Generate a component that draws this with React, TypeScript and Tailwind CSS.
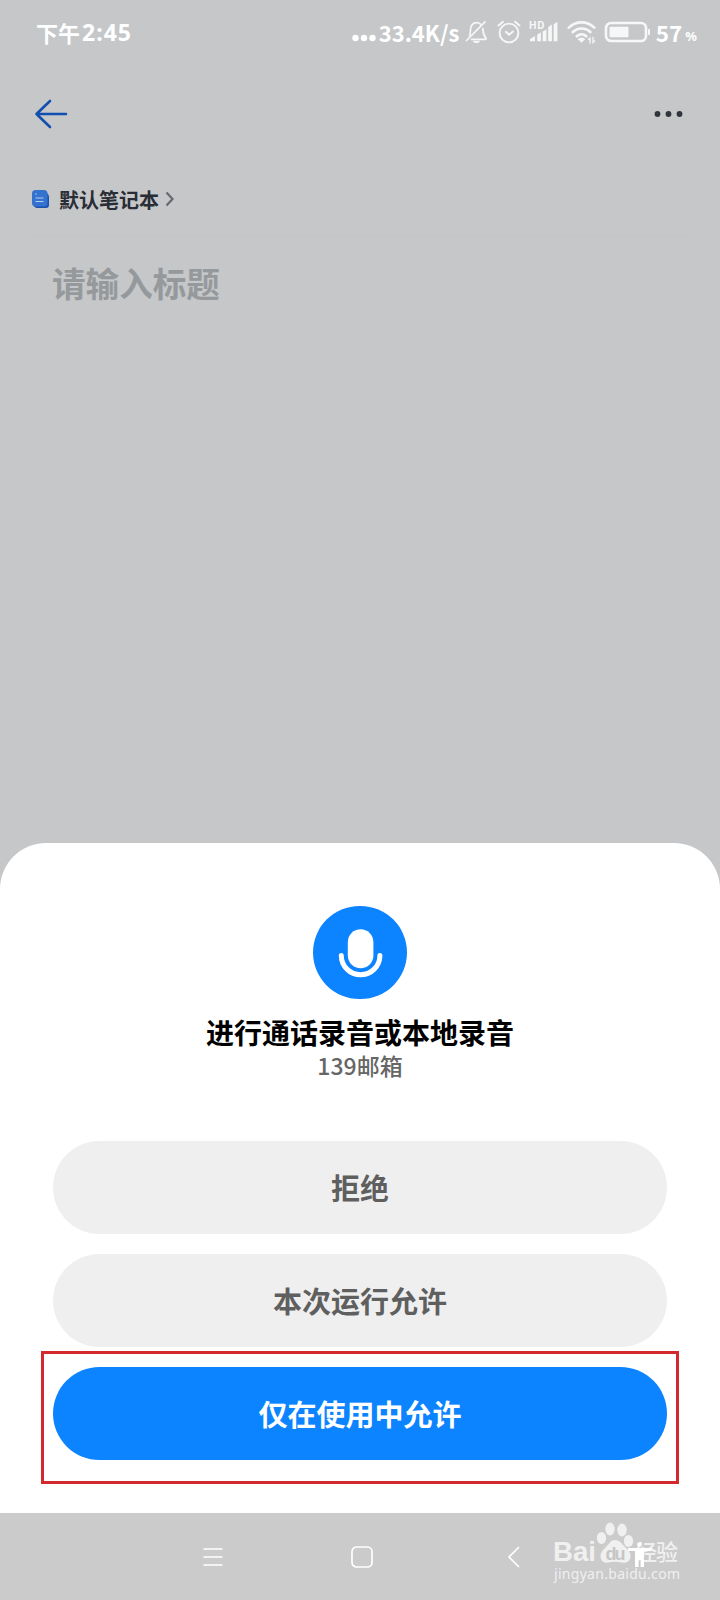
import clsx from "clsx";

const StatusBar = () => {
  return (
    <div className="h-16 flex items-center pl-[36px] pr-[23px] text-white font-bold">
      <div className="flex text-[22px] leading-8">
        <span>下午</span>
        <span className="ml-[2px] font-['Noto_Sans'] text-[23px] tracking-[1px]">
          2:45
        </span>
      </div>
      <div className="ml-auto flex items-center">
        <svg width="25" height="32" viewBox="0 0 25 32" fill="#fff">
          <circle cx="3.5" cy="22" r="3.2" />
          <circle cx="12" cy="22" r="3.2" />
          <circle cx="20.5" cy="22" r="3.2" />
        </svg>
        <span className="w-[84px] pl-[2px] text-[22px] leading-8 whitespace-nowrap">
          33.4K/s
        </span>
        {/* muted bell */}
        <svg
          className="ml-[4px]"
          width="24"
          height="24"
          viewBox="0 0 24 24"
          fill="none"
          stroke="#f7f7f7"
          strokeWidth="1.7"
          strokeLinecap="round"
        >
          <path d="M4.5 15.5c1-1.5 1-3 1-6 0-4 2.6-6.8 6-6.8 1.6 0 3 .6 4 1.5" />
          <path d="M17.8 8.6c.2 5 .7 6.4 3 9.4a.8.8 0 0 1-.6 1.4H6.5" />
          <path d="M20 1.8 1.5 20.5" />
          <path d="M8.5 21.3h6l-1.5 1.2h-3z" fill="#f7f7f7" strokeWidth="1" />
        </svg>
        {/* alarm clock */}
        <svg
          className="ml-[8px]"
          width="24"
          height="24"
          viewBox="0 0 24 24"
          fill="none"
          stroke="#f7f7f7"
          strokeWidth="1.9"
          strokeLinecap="round"
        >
          <circle cx="12" cy="13" r="9.4" />
          <path d="M1.5 5.6 6 1.8M22.5 5.6 18 1.8M8.8 11.8l3.2 3 4-3.3" />
        </svg>
        <div className="relative ml-[8px]">
          <svg width="30" height="24" viewBox="0 0 30 24" fill="#f7f7f7">
            <path d="M1 21.3v-2.3l5-3v5.3zM8.2 14.5l3.7-2v8.8H8.2zM13.7 11.5l3.7-2v11.8h-3.7zM19.2 7l3.7-2.5v16.8h-3.7zM24.7 4.3l3.7-2.6v19.6h-3.7z" />
          </svg>
          <span className="absolute left-0 -top-[3px] text-[10.5px] leading-4 tracking-[0.4px] text-[#f7f7f7]">
            HD
          </span>
        </div>
        <svg
          className="ml-[8px]"
          width="29"
          height="24"
          viewBox="0 0 29 24"
          fill="none"
          stroke="#f7f7f7"
          strokeWidth="2.7"
          strokeLinecap="round"
        >
          <path d="M1.8 7.6c7.2-7 18.5-7 25.5 0M5.8 12c5-4.7 12.6-4.7 17.5 0M9.8 16.2c2.8-2.5 6.7-2.5 9.5 0" />
          <path
            d="m11.5 19.2 3.1 3 3-3c-1.8-1.6-4.3-1.6-6.1 0z"
            fill="#f7f7f7"
            strokeWidth="1"
          />
          <path d="M23 23v-5l-1.5 1.5M26 17.5v5l1.5-1.5" strokeWidth="1.3" />
        </svg>
        <svg
          className="ml-[8px]"
          width="46"
          height="22"
          viewBox="0 0 46 22"
          fill="none"
        >
          <rect
            x="2"
            y="2"
            width="40"
            height="18"
            rx="5"
            stroke="#f7f7f7"
            strokeWidth="2.6"
          />
          <rect x="5.5" y="5.8" width="19" height="10.5" rx="1" fill="#f7f7f7" />
          <path d="M44 8h.8q1.2 0 1.2 1v4q0 1-1.2 1H44z" fill="#f7f7f7" />
        </svg>
        <span className="ml-[6px] text-[22.5px] leading-8">57</span>
        <span className="ml-[3px] mt-[7px] font-['Noto_Sans'] text-[13px] leading-5">
          %
        </span>
      </div>
    </div>
  );
};

const NotebookIcon = () => {
  return (
    <svg width="18" height="19" viewBox="0 0 18 19">
      <path
        d="M5 2.8h9.5Q17 4 17 7v8q0 3-3 3H5q-2 0-3-2z"
        fill="#1b52b2"
      />
      <rect x="0" y="0" width="15.5" height="16.5" rx="3.5" fill="#3472cf" />
      <path d="M3.5 8h8M3.5 11.5h8" stroke="#b7cdec" strokeWidth="1.2" />
      <circle cx="4" cy="4" r=".8" fill="#a9c6ee" />
    </svg>
  );
};

type TAction = {
  label: string;
  primary?: boolean;
};

const actions: TAction[] = [
  { label: "拒绝" },
  { label: "本次运行允许" },
  { label: "仅在使用中允许", primary: true },
];

const PermissionSheet = () => {
  return (
    <div className="h-[670px] bg-white rounded-t-[46px] px-[53px] pt-[63px] flex flex-col items-center">
      <div className="w-[94px] h-[93px] flex justify-center rounded-full bg-[#0d84ff]">
        <svg width="93" height="93" viewBox="0 0 93 93" fill="none">
          <rect x="33.8" y="23.3" width="25.6" height="39" rx="12.8" fill="#fff" />
          <path
            d="M27.3 49.5a19.3 19.3 0 0 0 38.6 0"
            stroke="#fff"
            strokeWidth="5"
            strokeLinecap="round"
          />
        </svg>
      </div>
      <h1 className="mt-[14px] h-[38px] leading-[38px] text-[28px] font-bold text-black whitespace-nowrap">
        进行通话录音或本地录音
      </h1>
      <p className="h-7 leading-7 text-[23px] text-[#666] font-medium">
        139邮箱
      </p>
      <div className="mt-[62px] w-full flex flex-col gap-[20px]">
        {actions.map((item) => (
          <div key={item.label} className="relative">
            <button
              className={clsx(
                "w-full h-[93px] rounded-full text-[29px] font-bold",
                item.primary
                  ? "bg-[#0d84ff] text-white"
                  : "bg-[#efefef] text-[#5f5f5f]"
              )}
            >
              {item.label}
            </button>
            {item.primary && (
              <div className="absolute -top-[16px] -left-[12px] -right-[12px] h-[133px] border-[3px] border-[#d3292f]"></div>
            )}
          </div>
        ))}
      </div>
    </div>
  );
};

const Watermark = () => {
  return (
    <div className="absolute left-[552px] top-[8px]">
      <svg width="140" height="78" viewBox="0 0 140 78" fill="#f0f0f0">
        <text
          x="1"
          y="40"
          fontSize="27"
          fontWeight="700"
          textLength="43"
          lengthAdjust="spacingAndGlyphs"
          fontFamily="Liberation Sans, sans-serif"
        >
          Bai
        </text>
        <ellipse cx="49.5" cy="17" rx="4.7" ry="6" />
        <ellipse cx="58" cy="8" rx="4.7" ry="6.5" />
        <ellipse cx="70" cy="9" rx="4.7" ry="6.5" />
        <ellipse cx="76.5" cy="20" rx="4.7" ry="6" />
        <path d="M63 19c5 0 7 4 10 7s6 5 5.5 10-5 6.5-9 5.5-9-1-13 0-8-1.5-8-6 3-7 6-10 4-6.5 8.500-6.500z" />
        <text
          x="53.5"
          y="39"
          fontSize="18"
          fontWeight="700"
          fill="#c6c6c6"
          textLength="20"
          fontFamily="Liberation Sans, sans-serif"
        >
          du
        </text>
        <text x="83" y="39" fontSize="22" textLength="43" fontWeight="500">
          经验
        </text>
        <text
          x="2"
          y="58"
          fontSize="14"
          textLength="126"
          fontFamily="Noto Sans, sans-serif"
        >
          jingyan.baidu.com
        </text>
        {/* accessibility shortcut */}
        <g fill="#fff">
          <circle cx="87.5" cy="23.5" r="2.3" />
          <path d="M76 27h23.500v3H92v16h-3.400v-7h-2v7H83V30h-7z" />
        </g>
      </svg>
    </div>
  );
};

const NavBar = () => {
  return (
    <div className="relative h-[87px] bg-[#cbcbcb]">
      <div className="h-full flex items-center pl-[203px]">
        <svg width="20" height="22" viewBox="0 0 20 22" stroke="#fff" strokeWidth="1.4">
          <path d="M.5 3h19M.5 11h19M.5 19h19" />
        </svg>
        <svg className="ml-[127px]" width="24" height="24" viewBox="0 0 24 24" fill="none">
          <rect x="2" y="2" width="20" height="20" rx="4.5" stroke="#fff" strokeWidth="1.7" />
        </svg>
        <svg className="ml-[133px]" width="14" height="24" viewBox="0 0 14 24" fill="none">
          <path d="M12 2 2 12l10 10" stroke="#fff" strokeWidth="1.7" />
        </svg>
      </div>
      <Watermark />
    </div>
  );
};

const App = () => {
  return (
    <div className="w-[720px] h-[1600px] overflow-hidden flex flex-col bg-[#c5c7c9] font-['Noto_Sans_CJK_SC',sans-serif]">
      <StatusBar />
      <div className="h-[100px] flex items-center justify-between pl-[34px] pr-[36px]">
        <svg
          width="34"
          height="30"
          viewBox="0 0 34 30"
          fill="none"
          stroke="#134fae"
          strokeWidth="2.6"
          strokeLinecap="round"
          strokeLinejoin="round"
        >
          <path d="M16 2 2.5 15 16 28M2.5 15H32" />
        </svg>
        <svg width="30" height="8" viewBox="0 0 30 8" fill="#30343b">
          <circle cx="3.5" cy="4" r="2.9" />
          <circle cx="14.5" cy="4" r="2.9" />
          <circle cx="25.5" cy="4" r="2.9" />
        </svg>
      </div>
      <div className="h-[72px] mx-[28px] pl-1 flex items-center border-b border-[#c2c4c6]">
        <NotebookIcon />
        <span className="ml-[9px] text-[20px] leading-8 font-bold text-[#292d35]">
          默认笔记本
        </span>
        <svg className="ml-[5px] mb-px" width="12" height="16" viewBox="0 0 12 16" fill="none">
          <path d="m2.5 1.5 6 6.5-6 6.5" stroke="#666a70" strokeWidth="2.2" />
        </svg>
      </div>
      <div className="flex-1 pl-[52px] pt-[22px]">
        <p className="text-[33.6px] leading-[50px] font-bold text-[#95999c]">
          请输入标题
        </p>
      </div>
      <PermissionSheet />
      <NavBar />
    </div>
  );
};

export default App;
